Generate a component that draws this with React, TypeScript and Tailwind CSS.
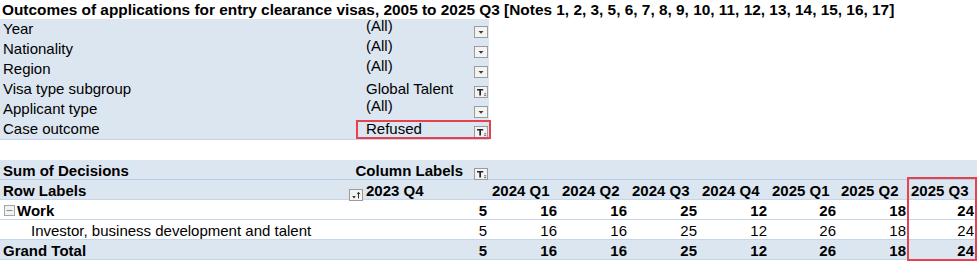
import React from 'react';

const filters = [
  { label: 'Year', value: '(All)', applied: false },
  { label: 'Nationality', value: '(All)', applied: false },
  { label: 'Region', value: '(All)', applied: false },
  { label: 'Visa type subgroup', value: 'Global Talent', applied: true },
  { label: 'Applicant type', value: '(All)', applied: false },
  { label: 'Case outcome', value: 'Refused', applied: true },
];

const quarters = ['2024 Q1', '2024 Q2', '2024 Q3', '2024 Q4', '2025 Q1', '2025 Q2', '2025 Q3'];
const first = 5;
const values = [16, 16, 25, 12, 26, 18, 24];

const cols = 'grid grid-cols-[363px_127px_70px_70px_70px_70px_69px_70px_68px]';

function DropButton() {
  return (
    <svg width="14" height="12" viewBox="0 0 14 12" className="shrink-0">
      <rect x="0.5" y="0.5" width="13" height="11" fill="#f3f3f3" stroke="#9b9b9b" />
      <path d="M4.5 5h5l-2.5 2.8z" fill="#3a3a3a" />
    </svg>
  );
}

function FilterButton() {
  return (
    <svg width="14" height="12" viewBox="0 0 14 12" className="shrink-0">
      <rect x="0.5" y="0.5" width="13" height="11" fill="#f3f3f3" stroke="#9b9b9b" />
      <path d="M3 3h6.2v1.6H7v4.9H5.3V4.6H3z" fill="#262626" />
      <path d="M10.2 7.8h2M10.2 9.6h2" stroke="#555" strokeWidth="0.9" />
    </svg>
  );
}

function SortButton() {
  return (
    <svg width="14" height="12" viewBox="0 0 14 12" className="shrink-0">
      <rect x="0.5" y="0.5" width="13" height="11" fill="#f3f3f3" stroke="#9b9b9b" />
      <path d="M3.2 7h3.6L5 9.4z" fill="#333" />
      <path d="M9.5 3.4v6" stroke="#333" strokeWidth="1" />
      <path d="M8 5.2l1.5-2 1.5 2" fill="none" stroke="#333" strokeWidth="0.9" />
    </svg>
  );
}

function MinusBox() {
  return (
    <svg width="11" height="11" viewBox="0 0 11 11" className="shrink-0">
      <rect x="0.5" y="0.5" width="10" height="10" fill="#f2f2f2" stroke="#a6a6a6" />
      <path d="M2.5 5.5h6" stroke="#8a8a8a" strokeWidth="1" />
    </svg>
  );
}

export default function App() {
  return (
    <div className="w-[980px] h-[262px] bg-white text-black font-['Liberation_Sans',Arial,sans-serif] text-[15px] overflow-hidden">
      {/* Title */}
      <div className="h-[19px] leading-[19px] pl-[2px] font-bold text-[15.4px] whitespace-nowrap">
        Outcomes of applications for entry clearance visas, 2005 to 2025 Q3 [Notes 1, 2, 3, 5, 6, 7, 8, 9, 10, 11, 12, 13, 14, 15, 16, 17]
      </div>

      {/* Report filters */}
      <div className="relative w-[489px] bg-[#dce6f1] border-b border-[#c3d3e8]">
        {filters.map((f) => (
          <div key={f.label} className="flex h-[20px]">
            <div className="w-[364px] pl-[3px] leading-[20px] whitespace-nowrap">{f.label}</div>
            <div className="flex flex-1 justify-between pr-[1px]">
              <span className={f.applied ? 'pl-[2px] leading-[20px]' : 'pl-[2px] leading-[20px] -mt-[3px]'}>
                {f.value}
              </span>
              <div className="flex items-end pb-[1px]">
                {f.applied ? <FilterButton /> : <DropButton />}
              </div>
            </div>
          </div>
        ))}
        <div className="absolute left-[356px] top-[101px] w-[135px] h-[19px] border-2 border-[#e5414f]" />
      </div>

      {/* Pivot table */}
      <div className="relative mt-[20px] w-[977px]">
        <div className={`${cols} h-[20px] bg-[#dce6f1] border-b border-[#b9cde5] font-bold`}>
          <div className="col-span-2 flex justify-between pr-[2px]">
            <span className="pl-[3px] leading-[21px]">Sum of Decisions</span>
            <div className="flex items-end gap-[11px] pb-[1px]">
              <span className="leading-[21px]">Column Labels</span>
              <div className="pb-[1px]">
                <FilterButton />
              </div>
            </div>
          </div>
        </div>

        <div className={`${cols} h-[20px] bg-[#dce6f1] border-b border-[#c5d6ea] font-bold`}>
          <div className="flex justify-between items-end pb-[1px]">
            <span className="pl-[3px] leading-[21px] self-start">Row Labels</span>
            <SortButton />
          </div>
          <div className="pl-[3px] leading-[21px]">2023 Q4</div>
          {quarters.map((q) => (
            <div key={q} className="pl-[2px] leading-[21px] whitespace-nowrap">{q}</div>
          ))}
        </div>

        <div className={`${cols} h-[20px] bg-white border-b border-[#c5d6ea] font-bold`}>
          <div className="flex items-center gap-[2px] pl-[4px]">
            <MinusBox />
            <span className="leading-[21px]">Work</span>
          </div>
          <div className="text-right pr-[3px] leading-[21px]">{first}</div>
          {values.map((v, i) => (
            <div key={i} className="text-right pr-[3px] leading-[21px]">{v}</div>
          ))}
        </div>

        <div className={`${cols} h-[20px] bg-white border-b border-[#c5d6ea]`}>
          <div className="pl-[31px] leading-[21px] whitespace-nowrap">Investor, business development and talent</div>
          <div className="text-right pr-[3px] leading-[21px]">{first}</div>
          {values.map((v, i) => (
            <div key={i} className="text-right pr-[3px] leading-[21px]">{v}</div>
          ))}
        </div>

        <div className={`${cols} h-[20px] bg-[#dce6f1] border-b border-[#c5d6ea] font-bold`}>
          <div className="pl-[3px] leading-[21px]">Grand Total</div>
          <div className="text-right pr-[3px] leading-[21px]">{first}</div>
          {values.map((v, i) => (
            <div key={i} className="text-right pr-[3px] leading-[21px]">{v}</div>
          ))}
        </div>

        <div className="absolute left-[907px] top-[17px] w-[70px] h-[84px] border-2 border-[#e5414f]" />
      </div>
    </div>
  );
}
